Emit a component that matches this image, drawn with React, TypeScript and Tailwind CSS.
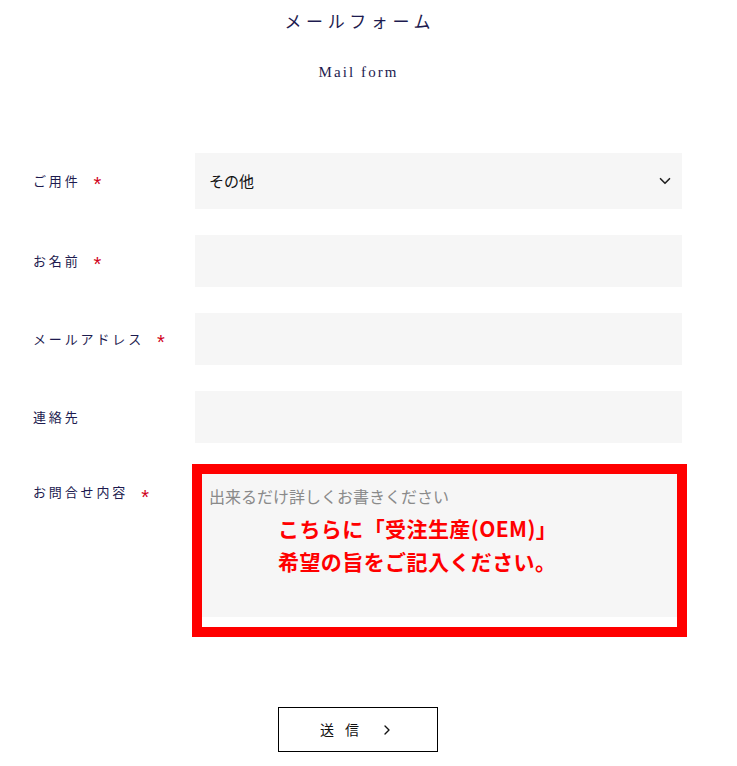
import { ChevronDown, ChevronRight } from "lucide-react";

const serif = "font-['Liberation_Serif','Noto_Sans_CJK_JP',serif]";
const sans = "font-['Noto_Sans_CJK_JP',sans-serif]";

function Label({ text, required, top }: { text: string; required?: boolean; top?: boolean }) {
  return (
    <div className={`w-[162px] shrink-0 flex ${top ? "items-start pt-[15px]" : "items-center"} text-[13px] tracking-[0.22em] text-[#1d1b4f] ${sans}`}>
      <span>{text}</span>
      {required && <span className="ml-[13px] mt-[5px] text-[#d0021b] text-[20px] font-['Liberation_Sans',sans-serif] leading-none">*</span>}
    </div>
  );
}

export default function App() {
  return (
    <div className="w-[737px] h-[766px] bg-white relative pl-[33px] pr-[55px]">
      <div className={`pt-[11px] text-center text-[#1d1b4f] ${serif}`}>
        <h1 className="text-[17px] tracking-[0.27em] pl-[0.27em] leading-[24px]">メールフォーム</h1>
        <p className="mt-[27px] text-[15px] tracking-[0.14em] pl-[0.14em] leading-[20px]">Mail form</p>
      </div>

      <form className="mt-[71px] flex flex-col">
        <div className="flex h-[56px]">
          <Label text="ご用件" required />
          <div className="flex-1 bg-[#f6f6f6] flex items-center justify-between pl-[14px] pr-[8px]">
            <span className={`text-[15px] text-[#111] ${sans}`}>その他</span>
            <ChevronDown size={18} strokeWidth={2.2} className="text-[#222]" />
          </div>
        </div>
        <div className="flex h-[52px] mt-[26px]">
          <Label text="お名前" required />
          <div className="flex-1 bg-[#f6f6f6]" />
        </div>
        <div className="flex h-[52px] mt-[26px]">
          <Label text="メールアドレス" required />
          <div className="flex-1 bg-[#f6f6f6]" />
        </div>
        <div className="flex h-[52px] mt-[26px]">
          <Label text="連絡先" />
          <div className="flex-1 bg-[#f6f6f6]" />
        </div>
        <div className="flex h-[150px] mt-[24px]">
          <Label text="お問合せ内容" required top />
          <div className={`flex-1 bg-[#f6f6f6] pl-[14px] pt-[17px] text-[16px] text-[#8a8a8a] ${sans}`}>
            出来るだけ詳しくお書きください
          </div>
        </div>

        <div className="flex justify-center mt-[90px]">
          <button type="button" className={`w-[160px] h-[45px] border border-black flex items-center justify-center gap-[20px] text-[14px] text-[#111] ${sans}`}>
            <span className="flex gap-[11px]"><span>送</span><span>信</span></span>
            <ChevronRight size={16} strokeWidth={2} />
          </button>
        </div>
      </form>

      <div className="absolute left-[192px] top-[464px] w-[495px] h-[173px] border-[10px] border-[#ff0000] pointer-events-none">
        <div className={`mt-[38px] ml-[76px] text-[21px] leading-[33px] font-bold text-[#ff0000] tracking-[0.02em] ${sans}`}>
          <p>こちらに「受注生産(OEM)」</p>
          <p>希望の旨をご記入ください。</p>
        </div>
      </div>
    </div>
  );
}
